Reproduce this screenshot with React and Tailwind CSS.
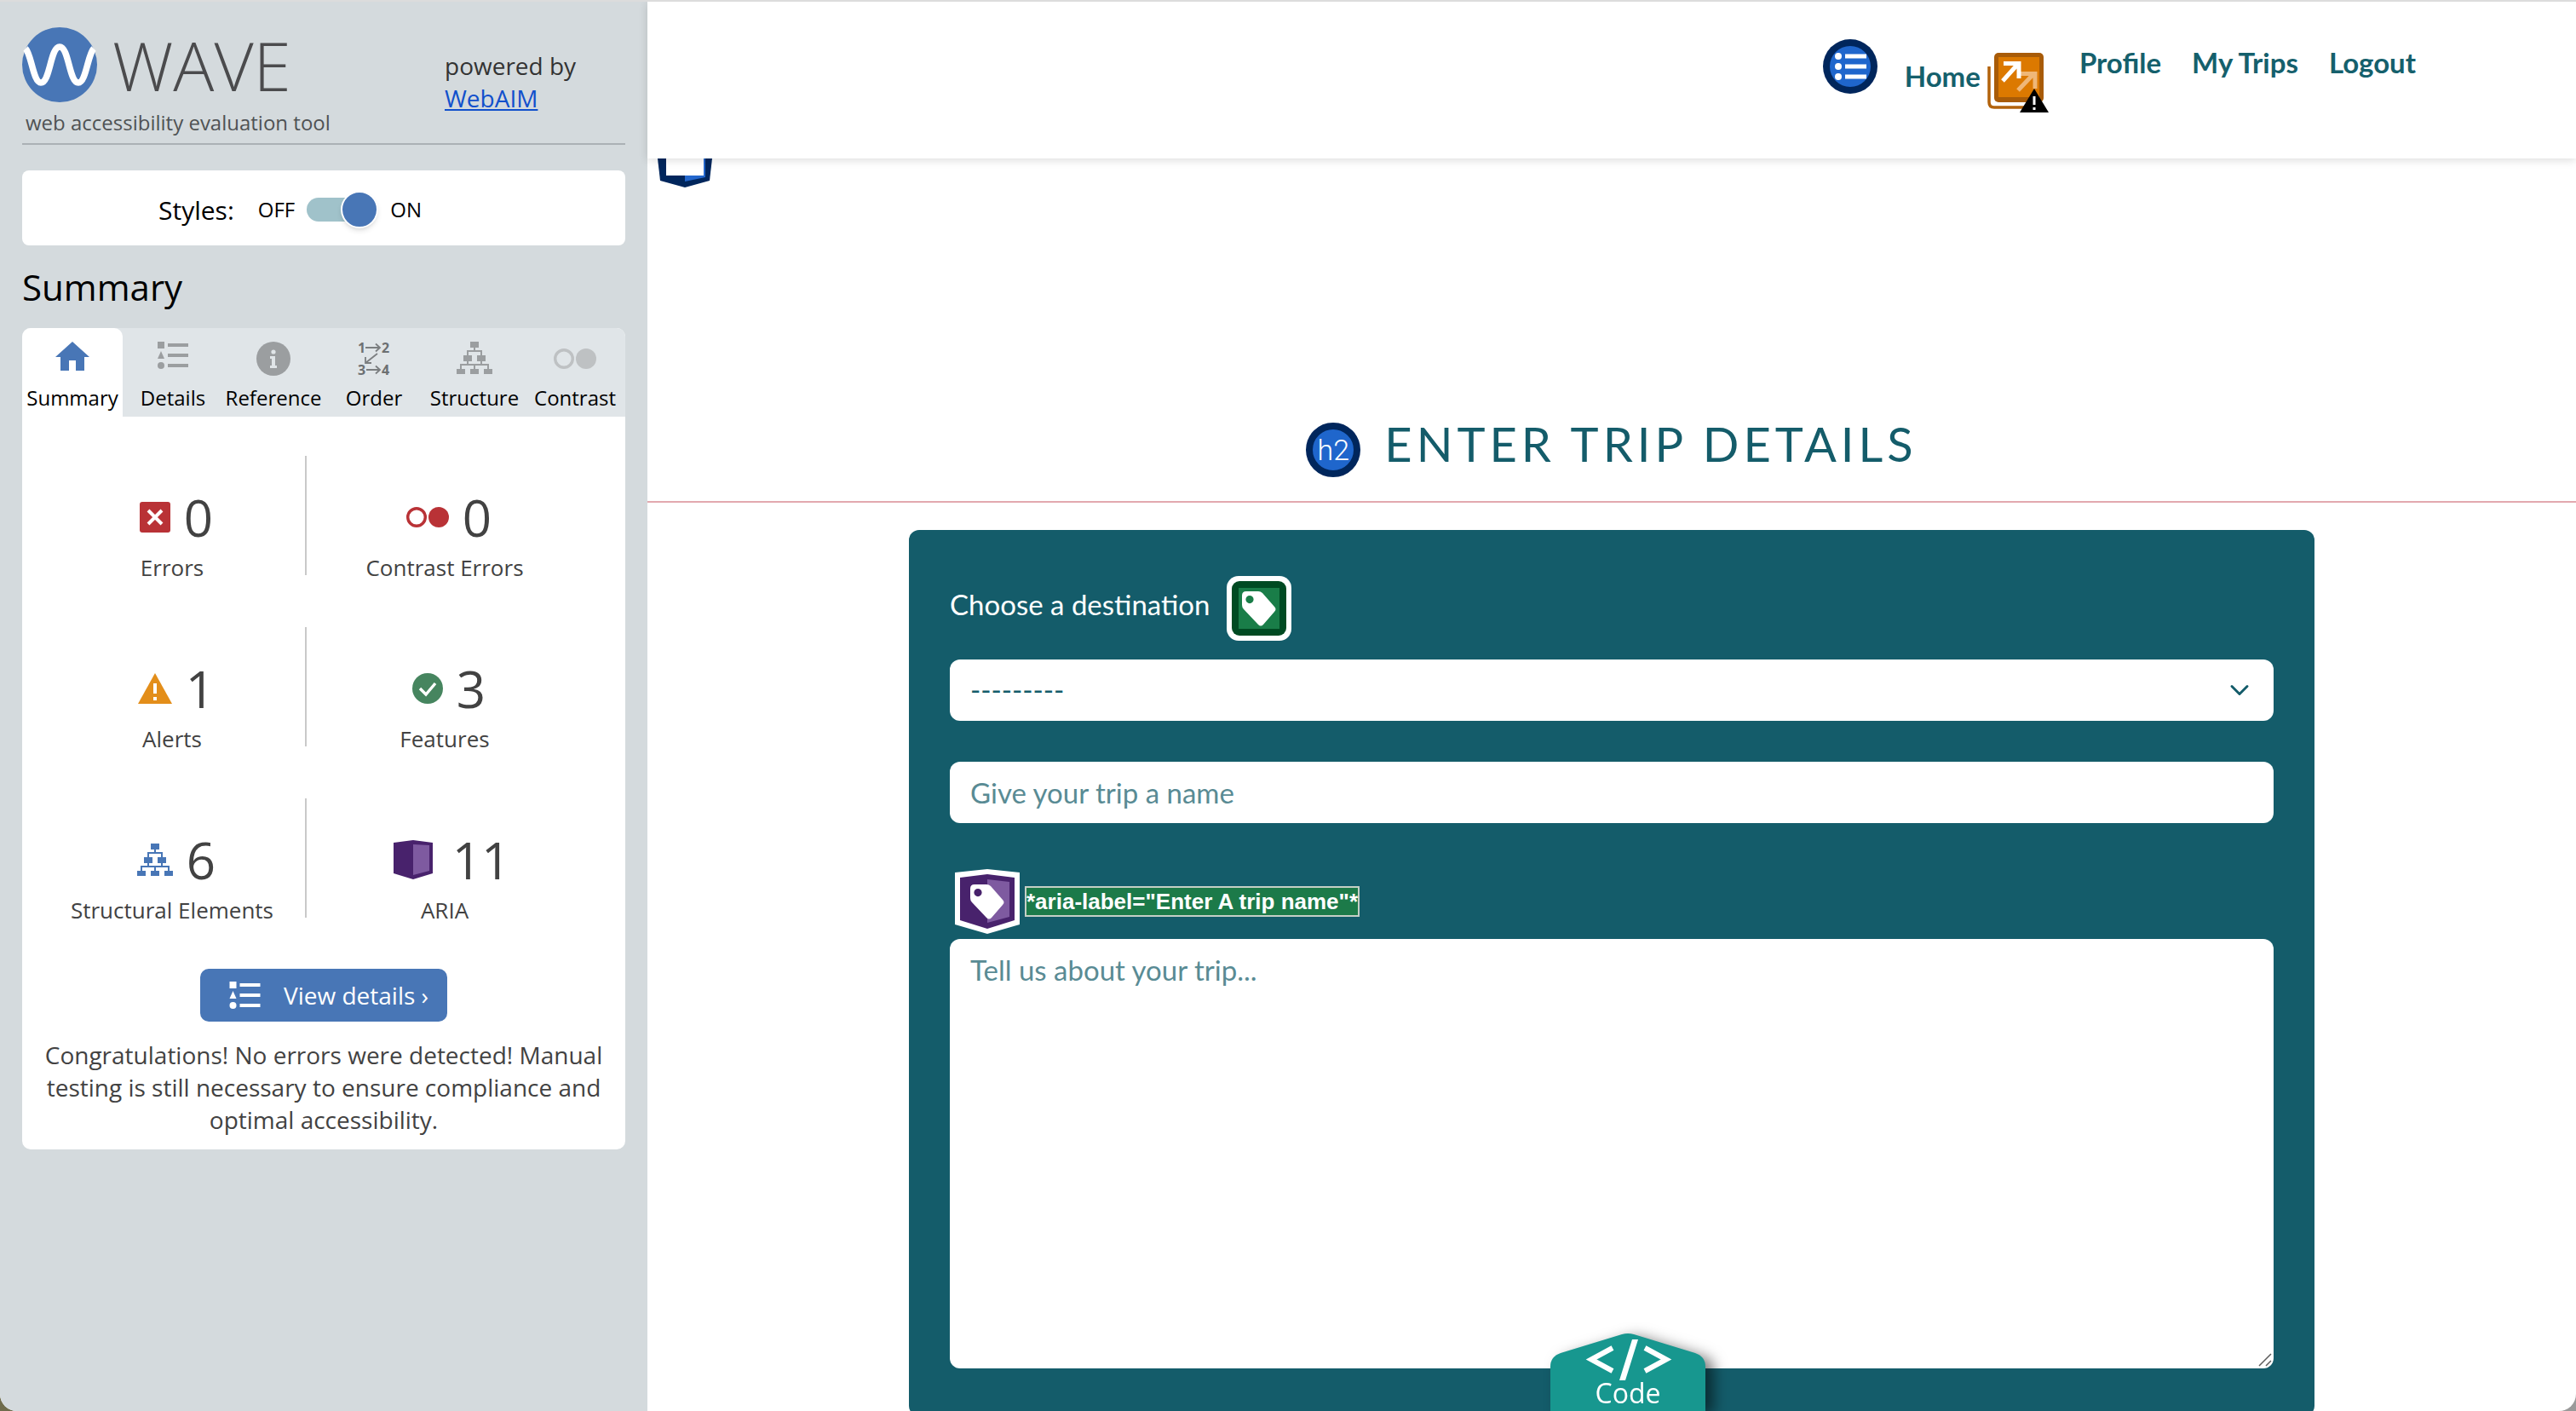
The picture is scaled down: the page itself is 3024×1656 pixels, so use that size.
import React, { useState } from "react";

function WaveLogo() {
  return (
    <svg viewBox="0 0 88 88" className="size-[88px] shrink-0" aria-hidden="true">
      <circle cx="44" cy="44" r="44" fill="#4876b6" />
      <path
        d="M4 25C11 32 13 65 22 65C33 65 33 23 44 23C55 23 55 65 66 65C75 65 77 32 84 25"
        fill="none"
        stroke="#fff"
        strokeWidth="7.500"
      />
    </svg>
  );
}

function HomeIcon() {
  return (
    <svg viewBox="0 0 40 34" className="h-[34px] w-[40px]" fill="#4876b6" aria-hidden="true">
      <path d="M20 0L40 18H34V34H24V22H16V34H6V18H0Z" />
    </svg>
  );
}

function ListIcon({ className }) {
  return (
    <svg viewBox="0 0 36 32" className={className} fill="currentColor" aria-hidden="true">
      <rect width="8" height="8" />
      <path d="M4 11L8 20H0Z" />
      <circle cx="4" cy="28" r="4" />
      <rect x="12" y="2" width="24" height="4" />
      <rect x="12" y="14" width="24" height="4" />
      <rect x="12" y="26" width="24" height="4" />
    </svg>
  );
}

function InfoIcon() {
  return (
    <svg viewBox="0 0 40 40" className="size-[40px]" aria-hidden="true">
      <circle cx="20" cy="20" r="20" fill="#9b9ea0" />
      <circle cx="20" cy="12" r="2.6" fill="#e0e5e8" />
      <path d="M16 17H22V28H24V31H16V28H18V20H16Z" fill="#e0e5e8" />
    </svg>
  );
}

function OrderIcon() {
  return (
    <svg viewBox="0 0 42 46" className="h-[46px] w-[42px] overflow-visible" fill="none" stroke="#7b7e80" strokeWidth="1.8" aria-hidden="true">
      <g fill="#6d7072" stroke="none" fontFamily="Open Sans, sans-serif" fontSize="16" fontWeight="700">
        <text x="2" y="13">1</text>
        <text x="30" y="13">2</text>
        <text x="2" y="39">3</text>
        <text x="30" y="39">4</text>
      </g>
      <path d="M11 7H28M23 2.500L28 7L23 11.500M12 33H28M23 28.500L28 33L23 37.500M25 14L11 25M11 18V25H18" />
    </svg>
  );
}

function TreeIcon({ className }) {
  return (
    <svg viewBox="0 0 42 38" className={className} fill="currentColor" aria-hidden="true">
      <path d="M16 0H26V7H16ZM8 16H18V23H8ZM24 16H34V23H24ZM0 32H10V38H0ZM16 32H26V38H16ZM32 32H42V38H32Z" />
      <path
        d="M21 6V11M13 17V11H29V17M13 22V27M29 22V27M5 33V27H37V33M21 27V33"
        fill="none"
        stroke="currentColor"
        strokeWidth="2"
      />
    </svg>
  );
}

function ContrastIcon({ className }) {
  return (
    <svg viewBox="0 0 50 24" className={className} aria-hidden="true">
      <circle cx="12" cy="12" r="10.300" fill="none" stroke="currentColor" strokeWidth="3.400" />
      <circle cx="38" cy="12" r="12" fill="currentColor" />
    </svg>
  );
}

function ErrorIcon() {
  return (
    <svg viewBox="0 0 36 36" className="size-[36px]" aria-hidden="true">
      <rect width="36" height="36" rx="3" fill="#b93236" />
      <path d="M10 10L26 26M26 10L10 26" stroke="#fff" strokeWidth="4" />
    </svg>
  );
}

function AlertIcon() {
  return (
    <svg viewBox="0 0 40 36" className="h-[36px] w-[40px]" aria-hidden="true">
      <path d="M20 0L40 36H0Z" fill="#e38e1a" />
      <path d="M18 12H22V24H18ZM18 28H22V32H18Z" fill="#fff" />
    </svg>
  );
}

function FeatureIcon() {
  return (
    <svg viewBox="0 0 36 36" className="size-[36px]" aria-hidden="true">
      <circle cx="18" cy="18" r="18" fill="#46855f" />
      <path d="M9 18L16 25L27 12" fill="none" stroke="#fff" strokeWidth="3.400" />
    </svg>
  );
}

function CubeIcon() {
  return (
    <svg viewBox="0 0 60 46" className="h-[46px] w-[60px]" aria-hidden="true">
      <path d="M7 3L30 0L53 3V39L30 46L7 39Z" fill="#48226c" />
      <path d="M30 5L49 6V36L30 41Z" fill="#7e5aa0" />
    </svg>
  );
}

function NavListIcon() {
  return (
    <svg viewBox="0 0 64 64" className="size-[64px]" aria-hidden="true">
      <circle cx="32" cy="32" r="32" fill="#00265c" />
      <circle cx="32" cy="32" r="24" fill="#1f66cc" />
      <g fill="#fff">
        <circle cx="18" cy="20" r="4" />
        <circle cx="18" cy="32" r="4" />
        <circle cx="18" cy="44" r="4" />
        <rect x="26" y="17.500" width="25" height="5" />
        <rect x="26" y="29.500" width="25" height="5" />
        <rect x="26" y="41.500" width="25" height="5" />
      </g>
    </svg>
  );
}

function RedundantLinkIcon() {
  return (
    <svg viewBox="0 0 72 70" className="h-[70px] w-[72px]" aria-hidden="true">
      <path d="M2 16V58Q2 64 8 64H50" fill="none" stroke="#b2620b" strokeWidth="3.500" />
      <rect x="8" width="58" height="58" rx="5" fill="#a85b08" />
      <rect x="13" y="5" width="48" height="47" fill="#dc7900" />
      <g fill="none" strokeWidth="5">
        <path d="M36 44L55 24M38 24.500H56V42" stroke="#efb778" />
        <path d="M18 33L36 13M19 12.500H37V30" stroke="#fff" />
      </g>
      <path d="M55 42L72 70H38Z" fill="#000" />
      <path d="M53.500 51H56.500V61H53.500ZM53.500 64H56.500V67H53.500Z" fill="#fff" />
    </svg>
  );
}

const TAG =
  "M17 12H31Q34 12 36 14L50 30Q53 33 50 36L37 51Q34 54 31 51L14 33Q12 31 12 28V17Q12 12 17 12ZM21 17A4.600 4.600 0 1 0 21 26.200A4.600 4.600 0 1 0 21 17Z";

function LabelIcon() {
  return (
    <svg viewBox="-6 -6 76 76" className="size-[76px] shrink-0" aria-hidden="true">
      <rect x="-6" y="-6" width="76" height="76" rx="14" fill="#fff" />
      <rect width="64" height="64" rx="9" fill="#004a22" />
      <rect x="8" y="8" width="48" height="48" fill="#197d48" />
      <path d={TAG} fill="#fff" fillRule="evenodd" />
    </svg>
  );
}

function AriaLabelIcon() {
  return (
    <svg viewBox="-6 -6 76 76" className="size-[76px] shrink-0" aria-hidden="true">
      <path d="M-6 -2L32 -6L70 -2V59L32 70L-6 59Z" fill="#fff" />
      <path d="M0 4L32 0L64 4V54L32 64L0 54Z" fill="#48226c" />
      <path d="M32 6L58 9V50L32 57Z" fill="#7e5aa0" />
      <path d={TAG} fill="#fff" fillRule="evenodd" />
    </svg>
  );
}

function HeaderLandmarkIcon() {
  return (
    <svg viewBox="0 0 64 68" className="h-[68px] w-[64px]" aria-hidden="true">
      <path d="M0 8L32 0L64 8V34L61 60L32 68L3 60L0 34Z" fill="#00265c" />
      <path d="M32 8H56V56L32 61Z" fill="#2266cc" />
      <rect x="10" y="12" width="44" height="42" fill="#fff" />
    </svg>
  );
}

const TABS = [
  { name: "Summary", icon: <HomeIcon /> },
  { name: "Details", icon: <ListIcon className="h-[32px] w-[36px] text-[#9b9ea0]" /> },
  { name: "Reference", icon: <InfoIcon /> },
  { name: "Order", icon: <OrderIcon /> },
  { name: "Structure", icon: <TreeIcon className="h-[38px] w-[42px] text-[#9b9ea0]" /> },
  { name: "Contrast", icon: <ContrastIcon className="h-[40px] w-[50px] text-[#bec1c3]" /> },
];

const STATS = [
  [
    { name: "Errors", count: 0, icon: <ErrorIcon /> },
    { name: "Contrast Errors", count: 0, icon: <ContrastIcon className="h-[24px] w-[50px] text-[#b93236]" /> },
  ],
  [
    { name: "Alerts", count: 1, icon: <AlertIcon /> },
    { name: "Features", count: 3, icon: <FeatureIcon /> },
  ],
  [
    { name: "Structural Elements", count: 6, icon: <TreeIcon className="h-[38px] w-[42px] text-[#4876b6]" /> },
    { name: "ARIA", count: 11, icon: <CubeIcon /> },
  ],
];

function Stat({ name, count, icon }) {
  return (
    <div className="flex flex-col items-center pt-[34px] text-[#424242]">
      <div className="flex items-center gap-4 pl-[10px] text-[60px] leading-[76px]">
        {icon}
        {count}
      </div>
      <div className="text-[26px] leading-[42px]">{name}</div>
    </div>
  );
}

function Sidebar() {
  const [tab, setTab] = useState("Summary");
  const [styles, setStyles] = useState(true);
  return (
    <aside className="w-[760px] shrink-0 bg-[#d4dadd] px-[26px] pt-[30px] font-['Open_Sans',sans-serif] text-black">
      <header className="flex border-b-2 border-[#abb1b5]">
        <div className="w-[496px]">
          <div className="flex items-center gap-[18px] text-[80px] leading-[88px] font-light text-[#4b4b4d]">
            <WaveLogo />
            WAVE
          </div>
          <p className="pl-1 text-2xl leading-[48px] text-[#4f5254]">web accessibility evaluation tool</p>
        </div>
        <p className="pt-[26px] text-[28px] leading-[38px] text-[#333]">
          powered by
          <br />
          <a href="#webaim" className="text-[#1150cc] underline">
            WebAIM
          </a>
        </p>
      </header>

      <div className="mt-[30px] flex h-[88px] items-center rounded-lg bg-white pt-1 pl-[160px]">
        <label htmlFor="styles" className="text-[30px]">
          Styles:
        </label>
        <span className="ml-7 text-2xl">OFF</span>
        <span className="relative mx-[14px] flex h-[44px] w-[84px] items-center">
          <input
            id="styles"
            type="checkbox"
            role="switch"
            checked={styles}
            onChange={() => setStyles(!styles)}
            className="peer h-[28px] w-[76px] appearance-none rounded-full bg-[#a0c2ca]"
          />
          <span className="pointer-events-none absolute left-0 size-[44px] rounded-full border-2 border-white bg-[#4876b6] shadow-md peer-checked:left-[40px]" />
        </span>
        <span className="text-2xl">ON</span>
      </div>

      <h1 className="mt-[5px] mb-1 text-[42px] leading-[88px]">Summary</h1>

      <div className="rounded-[10px] bg-white">
        <div role="tablist" className="flex rounded-t-[10px] bg-[#e0e5e8]">
          {TABS.map(({ name, icon }) => (
            <button
              key={name}
              role="tab"
              aria-selected={tab === name}
              onClick={() => setTab(name)}
              className="flex flex-1 basis-0 flex-col items-center rounded-t-[10px] pt-4 text-2xl leading-[44px] aria-selected:bg-white"
            >
              <span className="flex h-[44px] items-start">{icon}</span>
              {name}
            </button>
          ))}
        </div>

        <div className="flex flex-col gap-[49px] pt-[46px] pr-[50px] pl-5">
          {STATS.map(([a, b]) => (
            <div key={a.name} className="grid grid-cols-[26fr_2px_27fr]">
              <Stat {...a} />
              <div className="h-[140px] bg-[#c9c9c9]" />
              <Stat {...b} />
            </div>
          ))}
        </div>

        <div className="flex justify-center pt-12">
          <button className="flex h-[62px] items-center gap-[27px] rounded-[10px] bg-[#4876b6] pr-[22px] pl-[34px] text-[28px] text-white">
            <ListIcon className="h-[32px] w-[37px]" />
            View details ›
          </button>
        </div>
        <p className="px-5 pt-5 pb-4 text-center text-[28px] leading-[38px] text-[#424242]">
          Congratulations! No errors were detected! Manual testing is still necessary to ensure compliance and optimal
          accessibility.
        </p>
      </div>
    </aside>
  );
}

function SiteHeader() {
  return (
    <header className="relative z-10 flex h-[184px] items-start justify-end gap-8 bg-white pt-[44px] pr-[188px] shadow-[0_2px_10px_rgba(0,0,0,0.14)]">
      <NavListIcon />
      <nav>
        <ul className="flex items-start gap-9 text-[33px] leading-[54px] font-bold text-[#15606c]">
          <li className="flex items-start gap-2 pt-4">
            <a href="#home">Home</a>
            <RedundantLinkIcon />
          </li>
          <li>
            <a href="#profile">Profile</a>
          </li>
          <li>
            <a href="#trips">My Trips</a>
          </li>
          <li>
            <a href="#logout">Logout</a>
          </li>
        </ul>
      </nav>
    </header>
  );
}

function TripForm() {
  return (
    <form className="mx-auto flex w-full max-w-[1650px] flex-col rounded-xl bg-[#145c6a] px-12 pt-[54px] pb-14 text-[33px] text-[#145c6a]">
      <div className="flex items-start gap-5">
        <label htmlFor="destination" className="leading-[66px] text-white">
          Choose a destination
        </label>
        <LabelIcon />
      </div>
      <div className="relative mt-[22px]">
        <select id="destination" className="h-[72px] w-full appearance-none rounded-xl bg-white px-6">
          <option>---------</option>
        </select>
        <svg
          viewBox="0 0 24 24"
          className="pointer-events-none absolute top-6 right-[28px] size-6"
          fill="none"
          stroke="currentColor"
          strokeWidth="3"
          strokeLinecap="round"
          strokeLinejoin="round"
          aria-hidden="true"
        >
          <path d="M3 7.500L12 16.500L21 7.500" />
        </svg>
      </div>
      <input
        type="text"
        aria-label="Enter A trip name"
        placeholder="Give your trip a name"
        className="mt-12 h-[72px] w-full rounded-xl bg-white px-6 placeholder:text-[#598b94]"
      />
      <div className="mt-[54px] flex items-center gap-[6px] pl-[6px]">
        <AriaLabelIcon />
        <span className="border-2 border-[#c5cfc6] bg-[#1c7a49] font-['Liberation_Sans',sans-serif] text-[26px] leading-8 font-bold text-white">
          *aria-label="Enter A trip name"*
        </span>
      </div>
      <div className="relative mt-[6px] flex">
        <textarea
          aria-label="Trip description"
          placeholder="Tell us about your trip..."
          className="h-[504px] w-full resize-none rounded-xl bg-white px-6 py-3 leading-[48px] placeholder:text-[#598b94]"
        />
        <svg
          viewBox="0 0 16 16"
          className="pointer-events-none absolute right-[2px] bottom-[2px] size-4"
          stroke="#5c5c5c"
          strokeWidth="1.500"
          aria-hidden="true"
        >
          <path d="M1 15L15 1M9 15L15 9" />
        </svg>
      </div>
    </form>
  );
}

function CodeTab() {
  return (
    <button className="absolute bottom-0 left-[1060px] h-[92px] w-[182px] drop-shadow-[10px_4px_8px_rgba(0,0,0,0.5)]">
      <svg viewBox="0 0 182 92" className="absolute inset-0" fill="none" aria-hidden="true">
        <path d="M0 92V40Q0 28 12 24L84 2Q91 0 98 2L170 24Q182 28 182 40V92Z" fill="#17978f" />
        <path d="M73 18L48 31.500L73 45M111 18L136 31.500L111 45" stroke="#fff" strokeWidth="6" />
        <path d="M96 8H103L88 56H81Z" fill="#fff" />
      </svg>
      <span className="relative block pt-[49px] font-['Open_Sans',sans-serif] text-[32px] leading-[43px] text-white">
        Code
      </span>
    </button>
  );
}

export default function App() {
  return (
    <div className="h-screen bg-linear-to-r from-[#6f6c4c] to-[#9a9a9a]">
      <div className="relative flex h-full overflow-hidden rounded-b-[20px] border-t-2 border-[#dcdcdc] bg-white">
        <Sidebar />
        <div className="relative min-w-0 flex-1 font-['Lato',sans-serif]">
          <SiteHeader />
          <div className="absolute top-[150px] left-[12px]">
            <HeaderLandmarkIcon />
          </div>
          <main className="pt-[296px]">
            <div className="mb-8 flex items-end justify-center gap-7 border-b-2 border-[#e2a9af] pb-7">
              <span className="flex size-[64px] items-center justify-center rounded-full border-8 border-[#00265c] bg-[#1f66cc] font-['Roboto',sans-serif] text-[34px] leading-none font-light text-white">
                h2
              </span>
              <h2 className="text-[56px] leading-[78px] tracking-[5px] text-[#145c6a]">ENTER TRIP DETAILS</h2>
            </div>
            <TripForm />
          </main>
          <CodeTab />
        </div>
      </div>
    </div>
  );
}
